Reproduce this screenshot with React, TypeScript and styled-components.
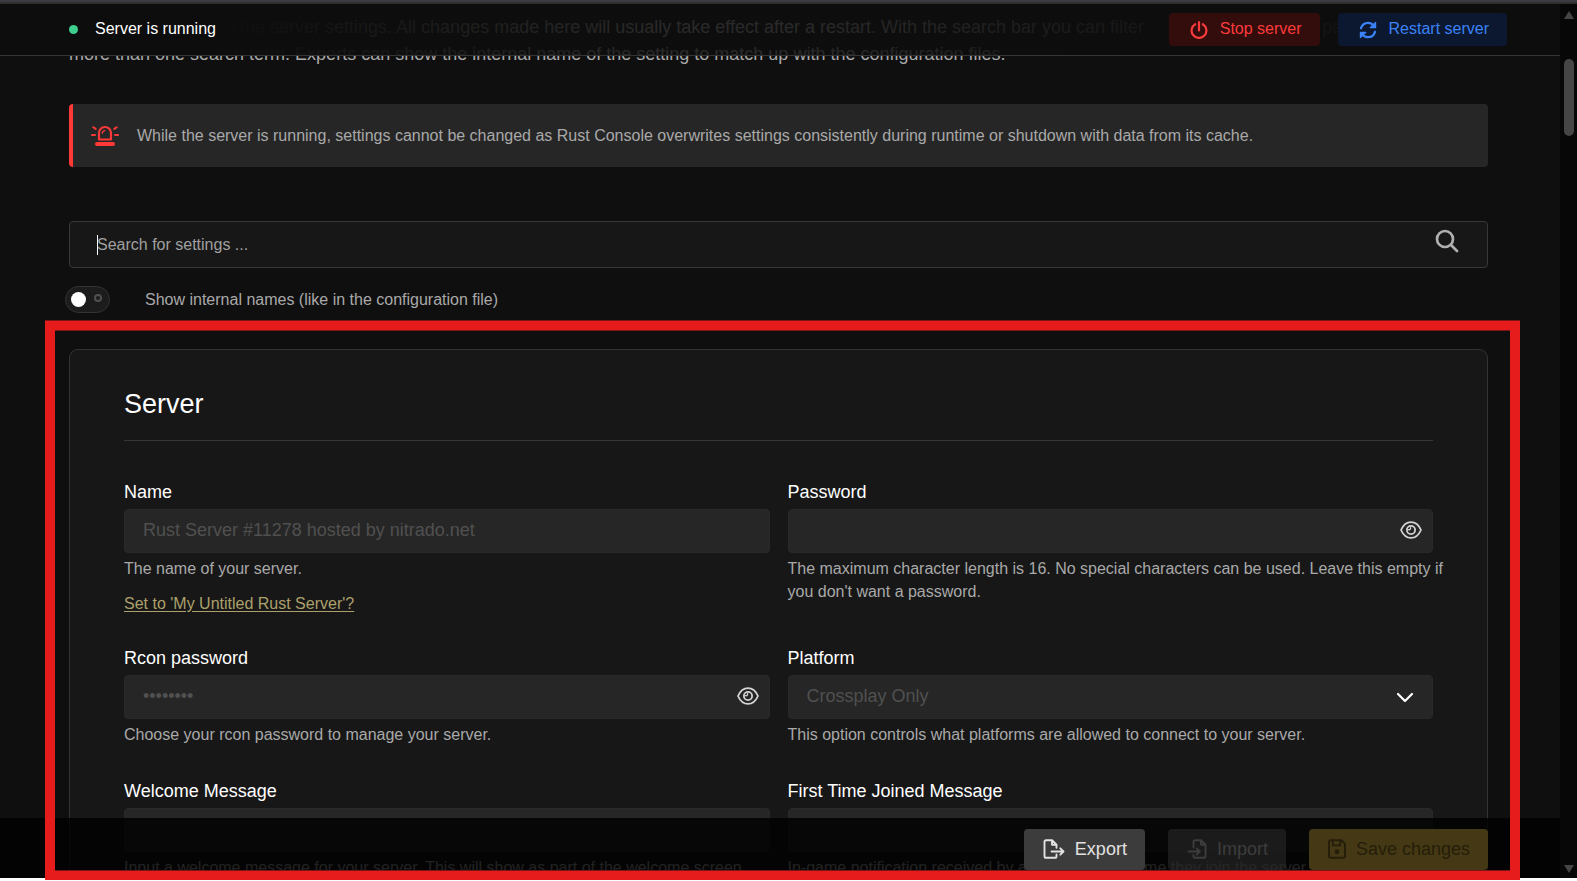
import React from "react";
import styled, { createGlobalStyle } from "styled-components";

const GlobalStyle = createGlobalStyle`
  *, *::before, *::after { box-sizing: border-box; }
  html, body { margin: 0; background: #0f0f0f; }
  body, button, input, select {
    font-family: "Liberation Sans", Arial, Helvetica, sans-serif;
    font-size: 16px;
  }
`;

const Frame = styled.div`
  position: relative;
  display: flex;
  flex-direction: column;
  height: 100vh;
  background: #0f0f0f;
  color: #a9a9a9;
  border-top: 2px solid #3b3b43;
  border-bottom: 3px solid #ffffff;
`;

const Viewport = styled.div`
  display: flex;
  flex: 1;
  min-height: 0;
  overflow: hidden;
  border-top: 2px solid #2f2f31;
`;

const Pane = styled.div`
  position: relative;
  flex: 1;
  min-width: 0;
  overflow: hidden;
`;

const StatusBar = styled.header`
  position: absolute;
  inset: 0 0 auto 0;
  z-index: 2;
  display: flex;
  align-items: center;
  gap: 18px;
  height: 52px;
  padding: 0 53px 0 69px;
  border-bottom: 1px solid #353535;
  background: linear-gradient(
    90deg,
    #0d0d0d 13%,
    rgba(13, 13, 13, 0.82) 42%,
    rgba(13, 13, 13, 0.82) 52%,
    rgba(13, 13, 13, 0.95) 75%,
    rgba(13, 13, 13, 0.96)
  );
`;

const StatusText = styled.div`
  display: flex;
  align-items: center;
  gap: 17px;
  flex: 1;
  padding-bottom: 2px;
  color: #ffffff;
  line-height: 24px;
`;

const StatusDot = styled.span`
  width: 9px;
  height: 9px;
  margin-top: 2px;
  border-radius: 50%;
  background: #3ecf8e;
`;

const PowerButton = styled.button<{ $tone: "red" | "blue" }>`
  display: flex;
  align-items: center;
  gap: 12px;
  height: 33px;
  padding: 0 18px 2px 21px;
  border: 0;
  border-radius: 4px;
  line-height: 24px;
  color: ${(p) => (p.$tone === "red" ? "#fb3b3b" : "#3b82f6")};
  background: ${(p) => (p.$tone === "red" ? "#330c0c" : "#0b1830")};

  svg { margin-top: 2px; }
`;

const Content = styled.main`
  padding: 10px 72px 0 69px;
`;

const Intro = styled.p`
  margin: 0;
  font-size: 18px;
  line-height: 27px;
  white-space: nowrap;
  text-indent: 138px;
`;

const IntroTail = styled.span`
  margin-left: 178px;
`;

const IntroLine = styled.span`
  display: block;
  text-indent: 0;
`;

const Notice = styled.div`
  display: flex;
  align-items: center;
  gap: 18px;
  height: 63px;
  margin-top: 36px;
  padding: 0 18px;
  border-left: 4px solid #ff3838;
  border-radius: 4px;
  background: #262626;

  svg { color: #ff3838; }
`;

const SearchBox = styled.label`
  position: relative;
  display: flex;
  align-items: center;
  height: 47px;
  margin-top: 54px;
  padding: 0 28px 0 27px;
  border: 1px solid #383838;
  border-radius: 4px;
  background: #171717;

  svg { margin-bottom: 7px; }
`;

const Caret = styled.span`
  position: absolute;
  left: 27px;
  top: 13px;
  width: 1px;
  height: 20px;
  background: #ffffff;
`;

const SearchInput = styled.input`
  flex: 1;
  min-width: 0;
  padding: 0;
  border: 0;
  outline: 0;
  background: transparent;
  color: #ffffff;
  line-height: 24px;
  &::placeholder { color: #a0a0a0; opacity: 1; }
`;

const ToggleRow = styled.div`
  display: flex;
  align-items: center;
  gap: 35px;
  height: 27px;
  margin: 18px 0 0 -4px;
  line-height: 24px;
`;

const Toggle = styled.input`
  appearance: none;
  display: flex;
  align-items: center;
  justify-content: space-between;
  width: 45px;
  height: 27px;
  margin: 0;
  padding: 0 7px 0 5px;
  border: 1px solid #333333;
  border-radius: 14px;
  background: #1c1c1c;

  &::before {
    content: "";
    width: 15px;
    height: 15px;
    border-radius: 50%;
    background: #ffffff;
  }
  &::after {
    content: "";
    width: 8px;
    height: 8px;
    margin-bottom: 4px;
    border: 2px solid #505050;
    border-radius: 50%;
  }
`;

const Card = styled.section`
  margin-top: 36px;
  padding: 36px 54px 54px;
  border: 1px solid #333333;
  border-radius: 9px;
  background: #171717;
`;

const CardTitle = styled.h2`
  margin: 0 0 38px;
  padding-bottom: 18px;
  border-bottom: 1px solid #373737;
  color: #ffffff;
  font-size: 27px;
  font-weight: 400;
  line-height: 36px;
`;

const FieldGrid = styled.div`
  display: grid;
  grid-template-columns: 1fr 1fr;
  gap: 32px 18px;
`;

const FieldBox = styled.div`
  min-width: 0;
`;

const FieldLabel = styled.label`
  display: block;
  margin-bottom: 3px;
  color: #ffffff;
  font-size: 18px;
  line-height: 27px;
`;

const Control = styled.div`
  display: flex;
  align-items: center;
  height: 44px;
  padding-right: 10px;
  border: 1px solid #292929;
  border-radius: 4px;
  background: #262626;
`;

const TextInput = styled.input`
  flex: 1;
  min-width: 0;
  height: 40px;
  padding: 0 18px 2px;
  border: 0;
  background: transparent;
  color: #505050;
  font-size: 18px;
`;

const SelectInput = styled.select`
  appearance: none;
  flex: 1;
  min-width: 0;
  height: 40px;
  padding: 0 18px 2px;
  border: 0;
  background: transparent;
  color: #505050;
  font-size: 18px;
  opacity: 1;
`;

const IconButton = styled.button`
  display: flex;
  padding: 0 0 3px;
  border: 0;
  background: transparent;
  color: #d4d4d4;
`;

const SelectArrow = styled.span`
  display: flex;
  padding-right: 8px;
  color: #ffffff;
`;

const Help = styled.p`
  margin: 4px 0 0;
  line-height: 23px;
  white-space: pre;
`;

const Suggestion = styled.a`
  display: inline-block;
  margin-top: 14px;
  color: #aca06c;
  line-height: 19px;
  vertical-align: top;
  text-underline-offset: 2px;
`;

const ActionBar = styled.footer`
  position: absolute;
  inset: auto 0 0 0;
  z-index: 2;
  display: flex;
  justify-content: flex-end;
  gap: 23px;
  height: 60px;
  padding: 11px 72px 8px;
  background: rgba(0, 0, 0, 0.8);
`;

const actionTones = {
  plain: "color: #e2e2e2; background: #3c3c3c;",
  muted: "color: #3d3d3d; background: rgba(42, 42, 42, 0.6);",
  gold: "color: #241e0a; background: #443914;",
};

const ActionButton = styled.button<{ $tone: keyof typeof actionTones }>`
  display: flex;
  align-items: center;
  gap: 10px;
  height: 41px;
  padding: 0 18px 1px 19px;
  border: 0;
  border-radius: 4px;
  font-size: 18px;
  ${(p) => actionTones[p.$tone]}
`;

const ScrollTrack = styled.div`
  display: flex;
  flex-direction: column;
  align-items: center;
  width: 17px;
  padding: 7px 0 5px 1px;
  background: #070707;
  color: #454545;
`;

const ScrollThumb = styled.div`
  width: 10px;
  height: 77px;
  margin: 40px 0 auto;
  border-radius: 5px;
  background: #454545;
`;

const Highlight = styled.div`
  position: absolute;
  z-index: 5;
  top: 319px;
  right: 57px;
  bottom: -2px;
  left: 45px;
  border: solid #e61c1c;
  border-width: 9px 10px;
  box-shadow: 0 -1px 0 #7a1616, inset 0 1px 0 #7a1616, inset 0 -1px 0 #7a1616;
  pointer-events: none;
`;

const strokeProps = {
  fill: "none",
  stroke: "currentColor",
  strokeLinecap: "round" as const,
  strokeLinejoin: "round" as const,
  "aria-hidden": true,
};

const PowerIcon = () => (
  <svg width="18" height="18" viewBox="0 0 18 18" strokeWidth="2.2" {...strokeProps}>
    <path d="M9 1.2v8.2M5.2 3.2a7.4 7.4 0 1 0 7.6 0" />
  </svg>
);

const RestartIcon = () => (
  <svg width="18" height="18" viewBox="0 0 18 18" strokeWidth="2.3" {...strokeProps}>
    <path d="M2 7.2C3 4 5.800 1.800 9 1.800c2.300 0 4.300 1 5.700 2.700M16 10.800c-1 3.200-3.800 5.400-7 5.400-2.300 0-4.300-1-5.700-2.700" />
    <path d="M16.600 1.300v5.400h-5.400zM1.400 16.700v-5.400h5.400z" fill="currentColor" strokeWidth="1.2" />
  </svg>
);

const AlarmIcon = () => (
  <svg width="28" height="22" viewBox="0 0 28 22" strokeWidth="2" {...strokeProps}>
    <path d="M8 14.500V8a6 6 0 0 1 12 0v6.500z" strokeWidth="2.200" />
    <path d="M11.300 8.200c.1-1.600 1-2.500 2.500-2.600" strokeWidth="1.400" />
    <path d="M6 19h16" strokeWidth="4" />
    <path d="M1 10h3M24 10h3M2.300 2.200l2.400 1.700M25.700 2.200l-2.400 1.700" />
  </svg>
);

const SearchIcon = () => (
  <svg width="24" height="24" viewBox="0 0 24 24" strokeWidth="2.700" {...strokeProps} stroke="#b0b0b0">
    <circle cx="10" cy="10" r="8" />
    <path d="M16 16l6 6" />
  </svg>
);

const EyeIcon = () => (
  <svg width="22" height="18" viewBox="0 0 22 18" strokeWidth="1.800" {...strokeProps}>
    <path d="M1 9C3.200 4 6.800 1.100 11 1.100S18.800 4 21 9c-2.200 5-5.800 7.900-10 7.900S3.200 14 1 9z" />
    <circle cx="11" cy="9" r="4.100" />
    <path d="M8.500 8.700c1.500.3 2.300-.5 2-2" strokeWidth="1.300" />
  </svg>
);

const ChevronIcon = () => (
  <svg width="18" height="12" viewBox="0 0 18 12" strokeWidth="2.200" {...strokeProps}>
    <path d="M2 3l7 7 7-7" />
  </svg>
);

const ExportIcon = () => (
  <svg width="22" height="20" viewBox="0 0 22 20" strokeWidth="1.900" {...strokeProps}>
    <path d="M13.500 15.500v1.700a1.600 1.600 0 0 1-1.600 1.600H3.100a1.600 1.600 0 0 1-1.600-1.600V2.800a1.600 1.600 0 0 1 1.600-1.600h6l4.400 4.400v3.200M9 1.400v4.400h4.400M8.500 12.500h11.800M17.300 9.300l3.200 3.200-3.200 3.200" />
  </svg>
);

const ImportIcon = () => (
  <svg width="20" height="20" viewBox="0 0 20 20" strokeWidth="1.900" {...strokeProps}>
    <path d="M6.500 8.500V2.800a1.600 1.600 0 0 1 1.600-1.600h6l4.400 4.400v11.600a1.600 1.600 0 0 1-1.600 1.600H8.100a1.600 1.600 0 0 1-1.600-1.600v-1.200M14 1.400v4.400h4.400M1.500 12.500h11.300M9.700 9.300l3.200 3.200-3.200 3.200" />
  </svg>
);

const SaveIcon = () => (
  <svg width="18" height="20" viewBox="1 0 18 20" strokeWidth="1.900" {...strokeProps}>
    <path d="M3.700 1.200h10.600l3.700 3.700V17a1.800 1.800 0 0 1-1.800 1.800H3.800A1.800 1.800 0 0 1 2 17V3a1.800 1.800 0 0 1 1.800-1.800M5.800 1.400v5h7.500v-5" />
    <circle cx="10" cy="12.700" r="1.500" fill="currentColor" />
  </svg>
);

type FieldProps = {
  id: string;
  label: string;
  help: string;
  value?: string;
  secret?: boolean;
  options?: string[];
  suggestion?: string;
};

const fields: FieldProps[] = [
  {
    id: "name",
    label: "Name",
    value: "Rust Server #11278 hosted by nitrado.net",
    help: "The name of your server.",
    suggestion: "Set to 'My Untitled Rust Server'?",
  },
  {
    id: "password",
    label: "Password",
    secret: true,
    help: "The maximum character length is 16. No special characters can be used. Leave this empty if\nyou don't want a password.",
  },
  {
    id: "rcon",
    label: "Rcon password",
    value: "rconpass",
    secret: true,
    help: "Choose your rcon password to manage your server.",
  },
  {
    id: "platform",
    label: "Platform",
    options: ["Crossplay Only"],
    help: "This option controls what platforms are allowed to connect to your server.",
  },
  {
    id: "welcome",
    label: "Welcome Message",
    help: "Input a welcome message for your server. This will show as part of the welcome screen.",
  },
  {
    id: "first-join",
    label: "First Time Joined Message",
    help: "In-game notification received by a player the first time they join the server",
  },
];

const Field = ({ id, label, help, value = "", secret, options, suggestion }: FieldProps) => (
  <FieldBox>
    <FieldLabel htmlFor={id}>{label}</FieldLabel>
    <Control>
      {options ? (
        <>
          <SelectInput id={id} disabled>
            {options.map((o) => (
              <option key={o}>{o}</option>
            ))}
          </SelectInput>
          <SelectArrow>
            <ChevronIcon />
          </SelectArrow>
        </>
      ) : (
        <TextInput id={id} type={secret ? "password" : "text"} defaultValue={value} disabled />
      )}
      {secret && (
        <IconButton type="button" aria-label={`Show ${label}`}>
          <EyeIcon />
        </IconButton>
      )}
    </Control>
    <Help>{help}</Help>
    {suggestion && <Suggestion href="#name">{suggestion}</Suggestion>}
  </FieldBox>
);

export default function App() {
  return (
    <Frame>
      <GlobalStyle />
      <Viewport>
        <Pane>
          <StatusBar>
            <StatusText>
              <StatusDot />
              Server is running
            </StatusText>
            <PowerButton type="button" $tone="red">
              <PowerIcon />
              Stop server
            </PowerButton>
            <PowerButton type="button" $tone="blue">
              <RestartIcon />
              Restart server
            </PowerButton>
          </StatusBar>

          <Content>
            <Intro>
              just the server settings. All changes made here will usually take effect after a
              restart. With the search bar you can filter
              <IntroTail>pa</IntroTail>
              <IntroLine>
                more than one search term. Experts can show the internal name of the setting to
                match up with the configuration files.
              </IntroLine>
            </Intro>
            <Notice role="alert">
              <AlarmIcon />
              <span>
                While the server is running, settings cannot be changed as Rust Console overwrites
                settings consistently during runtime or shutdown with data from its cache.
              </span>
            </Notice>
            <SearchBox>
              <Caret />
              <SearchInput type="text" placeholder="Search for settings ..." aria-label="Search for settings" />
              <SearchIcon />
            </SearchBox>
            <ToggleRow>
              <Toggle id="internal-names" type="checkbox" role="switch" />
              <label htmlFor="internal-names">
                Show internal names (like in the configuration file)
              </label>
            </ToggleRow>
            <Card>
              <CardTitle>Server</CardTitle>
              <FieldGrid>
                {fields.map((f) => (
                  <Field key={f.id} {...f} />
                ))}
              </FieldGrid>
            </Card>
          </Content>

          <ActionBar>
            <ActionButton type="button" $tone="plain">
              <ExportIcon />
              Export
            </ActionButton>
            <ActionButton type="button" $tone="muted" disabled>
              <ImportIcon />
              Import
            </ActionButton>
            <ActionButton type="button" $tone="gold" disabled>
              <SaveIcon />
              Save changes
            </ActionButton>
          </ActionBar>
        </Pane>
        <ScrollTrack>
          <svg width="10" height="8" viewBox="0 0 10 8" aria-hidden="true">
            <path d="M5 0l5 8H0z" fill="currentColor" />
          </svg>
          <ScrollThumb />
          <svg width="10" height="8" viewBox="0 0 10 8" aria-hidden="true">
            <path d="M5 8l5-8H0z" fill="currentColor" />
          </svg>
        </ScrollTrack>
      </Viewport>
      <Highlight />
    </Frame>
  );
}
